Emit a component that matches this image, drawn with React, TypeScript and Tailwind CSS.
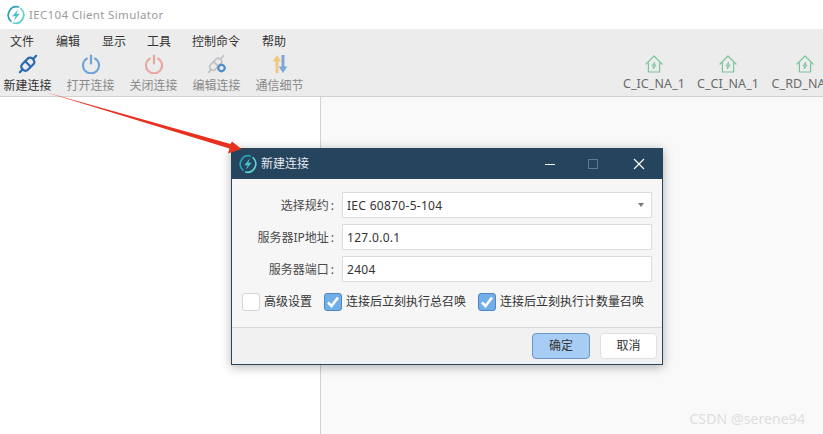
import React from "react";

const font = { fontFamily: '"Noto Sans", "Noto Sans CJK SC", sans-serif' };

function AppLogo({ size }: { size: number }) {
  return (
    <svg width={size} height={size} viewBox="0 0 24 24" fill="none">
      <path d="M6 19.5A10 10 0 0 1 15 2.4" stroke="#2a9fb8" strokeWidth="2" strokeLinecap="round" />
      <path d="M18 4.5A10 10 0 0 1 9 21.6" stroke="#5fd0cf" strokeWidth="2" strokeLinecap="round" />
      <path d="M14.5 5 7.5 13.5h4L9.5 19l7-8.5h-4z" fill="#4cc0cc" />
    </svg>
  );
}

function LinkIcon() {
  return (
    <svg width="20" height="20" viewBox="0 0 20 20" fill="none" stroke="#2a6ab0" strokeWidth="2.2" strokeLinecap="round">
      <path d="M4.2 10.2 9.8 4.6a3.2 3.2 0 0 1 4.6 0l1 1a3.2 3.2 0 0 1 0 4.6l-5.6 5.6a3.2 3.2 0 0 1-4.6 0l-1-1a3.2 3.2 0 0 1 0-4.6z" />
      <path d="M7.5 7.5 12.5 12.5M4.5 15.5 1.8 18.2M15.5 4.5 18.2 1.8" />
    </svg>
  );
}

function PowerIcon({ color }: { color: string }) {
  return (
    <svg width="20" height="20" viewBox="0 0 20 20" fill="none" stroke={color} strokeWidth="2.2" strokeLinecap="round">
      <path d="M5.8 4.6a8 8 0 1 0 8.4 0" />
      <path d="M10 1.5v8" />
    </svg>
  );
}

function EditLinkIcon() {
  return (
    <svg width="20" height="20" viewBox="0 0 20 20" fill="none">
      <g stroke="#c0c2c5" strokeWidth="1.8" strokeLinecap="round">
        <path d="M3.6 10.6 9 5.2a3 3 0 0 1 4.4 0l.4.4a3 3 0 0 1 0 4.4l-5.4 5.4a3 3 0 0 1-4.4 0l-.4-.4a3 3 0 0 1 0-4.4z" />
        <path d="M3.8 16.2 1.8 18.2M14.5 4 16.5 1.6M7 8l5 5" />
      </g>
      <circle cx="14.5" cy="14" r="3.2" fill="#ececec" stroke="#4f8fc9" strokeWidth="2.2" />
      <path d="M14.5 9.8v1.4M14.5 16.8v1.4M10.3 14h1.4M17.3 14h1.4" stroke="#4f8fc9" strokeWidth="1.6" />
    </svg>
  );
}

function TransferIcon() {
  return (
    <svg width="20" height="20" viewBox="0 0 20 20">
      <path d="M7 1 2.8 7.5H5.5V19h3V7.5h2.8z" fill="#f2c77e" />
      <path d="M11.5 1h3v11.5h2.8L13 19l-4.3-6.5h2.800z" fill="#7aa8da" />
    </svg>
  );
}

function HomeIcon() {
  return (
    <svg width="18" height="18" viewBox="0 0 18 18" fill="none" stroke="#7cc49a" strokeWidth="1.2" strokeLinejoin="round">
      <path d="M1 9 9 1l8 8" strokeLinecap="round" />
      <path d="M3.4 7.5V17h11.2V7.5" />
      <path d="M9.8 7 7 11h2.2L8.2 14l2.8-4H8.8z" strokeWidth="1" />
    </svg>
  );
}

function ToolButton({ icon, label, tone }: { icon: React.ReactNode; label: string; tone: string }) {
  return (
    <div className="flex flex-col items-center w-[63px]">
      <div className="h-[22px] flex items-center justify-center">{icon}</div>
      <span className={`text-[12px] leading-[16px] mt-[3px] whitespace-nowrap ${tone}`}>{label}</span>
    </div>
  );
}

function CommandButton({ label, width }: { label: string; width: string }) {
  return (
    <div className={`flex flex-col items-center shrink-0 ${width}`}>
      <HomeIcon />
      <span className="text-[12.5px] tracking-[0.1px] leading-[16px] mt-[3px] text-[#6b6b6b] whitespace-nowrap">{label}</span>
    </div>
  );
}

function Field({ label, value }: { label: string; value: string }) {
  return (
    <div className="flex items-center h-[26px]">
      <span className="w-[104px] text-right pr-[2px] text-[12px] leading-[18px] pt-[1px] text-[#4a4a4a] whitespace-nowrap">
        {label}
        <span className="ml-[2px]">:</span>
      </span>
      <div className="ml-[6px] flex-1 h-full bg-white border border-[#dcdcdc] flex items-center pl-[4px] pt-[1px] text-[12px] tracking-[0.3px] text-[#333]">
        {value}
      </div>
    </div>
  );
}

function Check({ checked, label, className }: { checked?: boolean; label: string; className: string }) {
  return (
    <div className={`flex items-center ${className}`}>
      <div
        className={`w-[18px] h-[18px] rounded-[3px] border flex items-center justify-center ${
          checked ? "bg-[#72aeea] border-[#4f86bd]" : "bg-white border-[#d6d6d6]"
        }`}
      >
        {checked && (
          <svg width="14" height="14" viewBox="0 0 14 14" fill="none" stroke="white" strokeWidth="2.6">
            <path d="M2 7.5 5.5 11 12 2.5" />
          </svg>
        )}
      </div>
      <span className="ml-[4px] text-[12px] leading-[18px] pt-[1px] text-[#333] whitespace-nowrap">{label}</span>
    </div>
  );
}

export default function App() {
  return (
    <div className="relative w-[823px] h-[434px] overflow-hidden bg-white flex flex-col" style={font}>
      {/* window title */}
      <div className="h-[29px] flex items-center pl-[6px] shrink-0">
        <AppLogo size={20} />
        <span className="ml-[3px] text-[11.5px] tracking-[0.35px] text-[#9a9a9a]">IEC104 Client Simulator</span>
      </div>

      {/* menu + toolbar */}
      <div className="h-[68px] shrink-0 bg-[#ececec] border-b border-[#d2d2d2] flex flex-col">
        <div className="h-[24px] flex items-center pt-[1px] text-[12px] text-[#333]">
          <span className="ml-[10px] w-[46px]">文件</span>
          <span className="w-[46px]">编辑</span>
          <span className="w-[45px]">显示</span>
          <span className="w-[45px]">工具</span>
          <span className="w-[70px]">控制命令</span>
          <span>帮助</span>
        </div>
        <div className="flex items-start justify-between">
          <div className="flex -ml-[4px]">
            <ToolButton icon={<LinkIcon />} label="新建连接" tone="text-[#333]" />
            <ToolButton icon={<PowerIcon color="#6ea5d6" />} label="打开连接" tone="text-[#8a8a8a]" />
            <ToolButton icon={<PowerIcon color="#e8a8a0" />} label="关闭连接" tone="text-[#8a8a8a]" />
            <ToolButton icon={<EditLinkIcon />} label="编辑连接" tone="text-[#8a8a8a]" />
            <ToolButton icon={<TransferIcon />} label="通信细节" tone="text-[#8a8a8a]" />
          </div>
          <div className="flex w-[206px] overflow-hidden mt-[2px]">
            <CommandButton label="C_IC_NA_1" width="w-[74px]" />
            <CommandButton label="C_CI_NA_1" width="w-[74px]" />
            <CommandButton label="C_RD_NA_1" width="w-[80px]" />
          </div>
        </div>
      </div>

      {/* main split */}
      <div className="flex-1 flex">
        <div className="w-[321px] bg-white border-r border-[#d2d2d2]" />
        <div className="flex-1 bg-[#f9f9f9]" />
      </div>

      {/* dialog */}
      <div className="absolute left-[231px] top-[148px] w-[432px] h-[217px] flex flex-col bg-[#f6f6f6] border border-[#2a4459] shadow-[0_2px_10px_rgba(0,0,0,0.3)]">
        <div className="h-[30px] bg-[#25455f] flex items-center shrink-0 pl-[6px]">
          <AppLogo size={20} />
          <span className="ml-[3px] text-[12px] text-[#e4e8ec]">新建连接</span>
          <div className="ml-auto flex items-center">
            <div className="w-[10px] h-px bg-white mr-[33px]" />
            <div className="w-[10px] h-[10px] border border-[#5d7b92] mr-[35px]" />
            <svg className="mr-[17px]" width="12" height="12" viewBox="0 0 12 12" stroke="white" strokeWidth="1.1">
              <path d="M1 1 11 11M11 1 1 11" />
            </svg>
          </div>
        </div>

        <div className="flex-1 flex flex-col pt-[13px] pr-[10px] gap-[6px]">
          <div className="relative">
            <Field label="选择规约" value="IEC 60870-5-104" />
            <div className="absolute right-[8px] top-[11px] w-0 h-0 border-x-[3px] border-x-transparent border-t-[4px] border-t-[#77777f]" />
          </div>
          <Field label="服务器IP地址" value="127.0.0.1" />
          <Field label="服务器端口" value="2404" />
          <div className="flex items-center mt-[4px] pl-[10px]">
            <Check label="高级设置" className="w-[82px]" />
            <Check checked label="连接后立刻执行总召唤" className="w-[154px]" />
            <Check checked label="连接后立刻执行计数量召唤" className="" />
          </div>
        </div>

        <div className="h-[37px] shrink-0 bg-[#f1f1f1] border-t border-[#d8d8d8] flex items-center justify-end pr-[5px] gap-[10px]">
          <div className="w-[58px] h-[26px] rounded-[4px] bg-[#a8cdf5] border border-[#6b97c6] flex items-center justify-center text-[12px] text-[#333]">
            确定
          </div>
          <div className="w-[57px] h-[26px] rounded-[4px] bg-white border border-[#e0e0e0] flex items-center justify-center text-[12px] text-[#333]">
            取消
          </div>
        </div>
      </div>

      {/* red arrow, annotated on top of the dialog */}
      <svg className="absolute left-0 top-0" width="823" height="434" viewBox="0 0 823 434" fill="none">
        <path d="M45 92 229.5 148.5 228 153.5 241.5 149 232 141.5 230.5 144z" fill="#e8301f" />
      </svg>

      {/* watermark */}
      <span className="absolute right-[18px] top-[408px] text-[14px] tracking-[0.1px] text-[#dedede]">CSDN @serene94</span>
    </div>
  );
}
